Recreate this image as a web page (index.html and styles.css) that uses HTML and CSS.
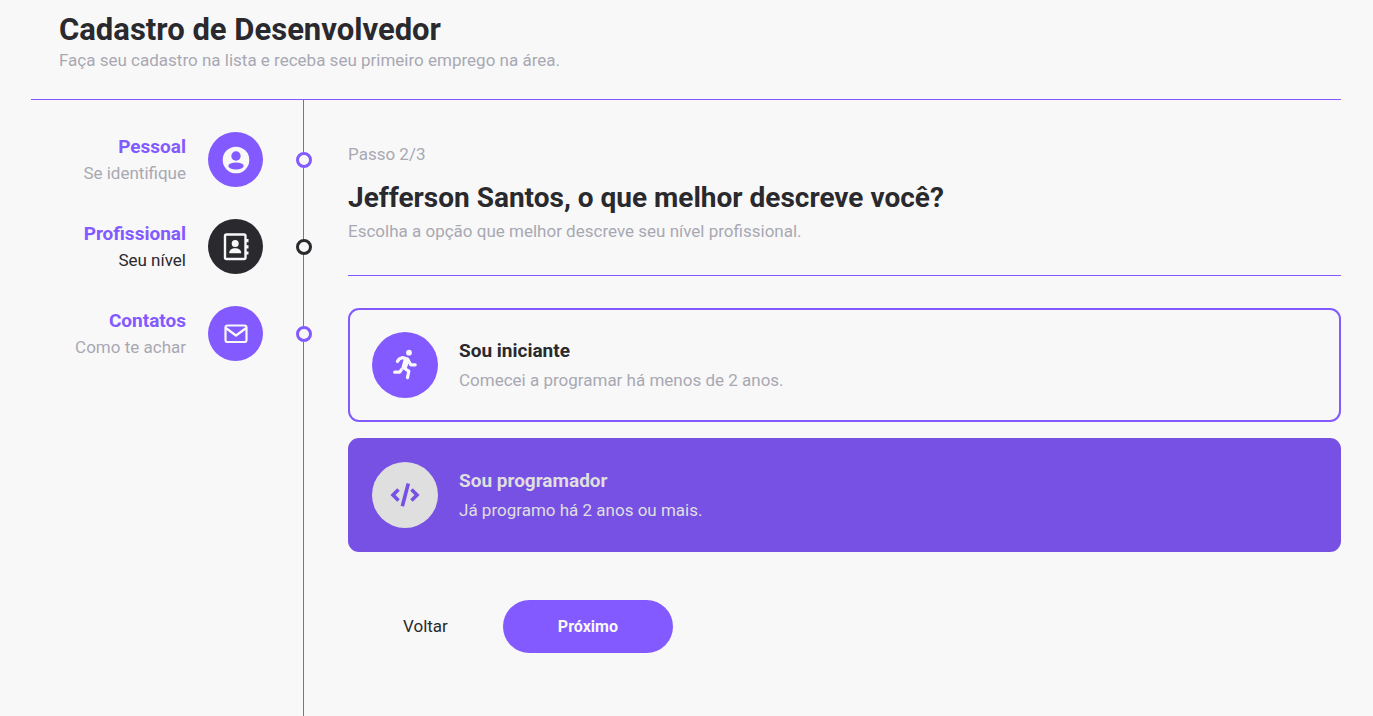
FILE: index.html
```html
<!DOCTYPE html>
<html lang="pt-BR">
<head>
<meta charset="utf-8">
<meta name="viewport" content="width=device-width, initial-scale=1">
<title>Cadastro de Desenvolvedor</title>
<link rel="stylesheet" href="styles.css">
</head>
<body>
<div class="page">
  <header class="header">
    <h1 class="header-title">Cadastro de Desenvolvedor</h1>
    <p class="header-text">Faça seu cadastro na lista e receba seu primeiro emprego na área.</p>
  </header>
  <div class="steps">
    <nav class="sidebar" aria-label="Etapas">
      <a class="step" href="#pessoal">
        <span class="step-info"><strong class="step-title">Pessoal</strong><span class="step-text">Se identifique</span></span>
        <span class="step-icon">
          <svg width="28" height="28" viewBox="0 0 28 28" aria-hidden="true"><circle cx="14" cy="14" r="13.3" fill="#f8f8f8"/><circle cx="14" cy="10" r="4.7" fill="#835aff"/><ellipse cx="14" cy="20" rx="7.7" ry="3.4" fill="#835aff"/></svg>
        </span>
        <span class="step-dot"></span>
      </a>
      <a class="step step-active" href="#profissional" aria-current="step">
        <span class="step-info"><strong class="step-title">Profissional</strong><span class="step-text">Seu nível</span></span>
        <span class="step-icon">
          <svg width="28" height="28" viewBox="0 0 28 28" aria-hidden="true"><rect x="3" y="1.500" width="20.5" height="24.5" rx="1.5" fill="none" stroke="#f8f8f8" stroke-width="2.4"/><path d="M24 6h2.500v3.200H24zM24 12.200h2.500v3.200H24zM24 18.400h2.500v3.200H24z" fill="#f8f8f8"/><circle cx="13.2" cy="10.5" r="3.5" fill="#f8f8f8"/><path d="M7.200 20.300c0-3.500 2.500-5 6-5s6 1.500 6 5z" fill="#f8f8f8"/></svg>
        </span>
        <span class="step-dot"></span>
      </a>
      <a class="step" href="#contatos">
        <span class="step-info"><strong class="step-title">Contatos</strong><span class="step-text">Como te achar</span></span>
        <span class="step-icon">
          <svg width="28" height="28" viewBox="0 0 28 28" fill="none" stroke="#f8f8f8" stroke-width="2.2" stroke-linecap="round" stroke-linejoin="round" aria-hidden="true"><rect x="3.500" y="5.500" width="21" height="16.500" rx="2"/><path d="M4.500 8.500l9.500 7 9.500-7"/></svg>
        </span>
        <span class="step-dot"></span>
      </a>
    </nav>
    <main class="content">
      <p class="content-step">Passo 2/3</p>
      <h2 class="content-title">Jefferson Santos, o que melhor descreve você?</h2>
      <p class="content-text">Escolha a opção que melhor descreve seu nível profissional.</p>
      <hr class="divider">
      <div class="options">
        <button class="option" type="button" aria-pressed="false">
          <span class="option-icon">
            <svg width="32" height="32" viewBox="0 0 32 32" fill="none" stroke="#f8f8f8" stroke-width="3.2" stroke-linecap="round" stroke-linejoin="round" aria-hidden="true"><circle cx="20" cy="3.700" r="2.900" fill="#f8f8f8" stroke="none"/><path d="M8.400 12.500l1.800-2.500 3.500-1.400 4.800 1.400 3.200 5.800h4.500"/><path d="M14 18.500l5.800 3.700-1.300 6.400"/><path d="M5.700 23.200h5l1.600-2.400"/><path d="M15.500 10l-2 7.500 1 1.500 3-1 2.200-7.500z" fill="#f8f8f8" stroke-width="1.500"/></svg>
          </span>
          <span class="option-info"><strong class="option-title">Sou iniciante</strong><span class="option-text">Comecei a programar há menos de 2 anos.</span></span>
        </button>
        <button class="option option-selected" type="button" aria-pressed="true">
          <span class="option-icon">
            <svg width="32" height="32" viewBox="0 0 32 32" fill="none" stroke="#7751e3" stroke-width="3.600" aria-hidden="true"><path d="M9.500 10.500L4 16l5.500 5.500M22.500 10.500L28 16l-5.500 5.500M19.300 4.500l-6 22.800"/></svg>
          </span>
          <span class="option-info"><strong class="option-title">Sou programador</strong><span class="option-text">Já programo há 2 anos ou mais.</span></span>
        </button>
      </div>
      <div class="actions">
        <a class="back" href="#pessoal">Voltar</a>
        <button class="next" type="button">Próximo</button>
      </div>
    </main>
  </div>
</div>
</body>
</html>
```
FILE: styles.css
```css
* {
  box-sizing: border-box;
  margin: 0;
  padding: 0;
}

body {
  background: #f8f8f8;
  color: #29292e;
  font-family: Roboto, "Liberation Sans", sans-serif;
  font-size: 17px;
}

button {
  border: 0;
  font: inherit;
  cursor: pointer;
}

a {
  color: inherit;
  text-decoration: none;
}

.page {
  display: flex;
  flex-direction: column;
  min-height: 100vh;
  padding: 0 32px 0 31px;
}

.header {
  padding: 12px 28px 27px;
  border-bottom: 1px solid #835aff;
}

.header-title {
  font-size: 31px;
  line-height: 36px;
}

.header-text {
  color: #a8a8b3;
  line-height: 24px;
}

.steps {
  display: flex;
  flex: 1;
}

.sidebar {
  display: flex;
  flex: none;
  flex-direction: column;
  gap: 32px;
  width: 273px;
  padding: 32px 40px 0 0;
  border-right: 1px solid #835aff;
}

.step {
  position: relative;
  display: flex;
  align-items: center;
  justify-content: flex-end;
  gap: 22px;
}

.step-info {
  display: flex;
  flex-direction: column;
  line-height: 27px;
  text-align: right;
}

.step-title,
.option-title {
  font-size: 19px;
}

.step-title {
  color: #835aff;
}

.step-text {
  color: #a8a8b3;
}

.step-icon {
  display: grid;
  place-items: center;
  width: 55px;
  height: 55px;
  border-radius: 50%;
  background: #835aff;
}

.step-dot {
  position: absolute;
  top: 50%;
  right: -49px;
  width: 16px;
  height: 16px;
  margin-top: -8px;
  border: 3px solid #835aff;
  border-radius: 50%;
  background: #f8f8f8;
}

.step-active .step-text {
  color: #29292e;
}

.step-active .step-icon {
  background: #29292e;
}

.step-active .step-dot {
  border-color: #29292e;
}

.content {
  flex: 1;
  padding: 43px 0 44px 44px;
}

.content-step,
.content-text {
  color: #a8a8b3;
  line-height: 22px;
}

.content-title {
  margin: 17px 0 6px;
  font-size: 28px;
  line-height: 32px;
}

.divider {
  height: 1px;
  margin: 33px 0 32px;
  border: 0;
  background: #835aff;
}

.options {
  display: flex;
  flex-direction: column;
  gap: 16px;
}

.option {
  display: flex;
  align-items: center;
  gap: 21px;
  padding: 22px;
  border: 2px solid #835aff;
  border-radius: 11px;
  background: transparent;
  color: #29292e;
  text-align: left;
}

.option-icon {
  display: grid;
  flex: none;
  place-items: center;
  width: 66px;
  height: 66px;
  border-radius: 50%;
  background: #835aff;
}

.option-info {
  display: flex;
  flex-direction: column;
  gap: 7px;
  line-height: 22px;
}

.option-text {
  color: #a8a8b3;
}

.option-selected {
  border-color: #7751e3;
  background: #7751e3;
  color: #dfdfdf;
}

.option-selected .option-icon {
  background: #dfdfdf;
}

.option-selected .option-text {
  color: #dfdfdf;
}

.actions {
  display: flex;
  align-items: center;
  margin-top: 48px;
}

.back,
.next {
  padding: 0 55px;
  line-height: 53px;
}

.next {
  border-radius: 27px;
  background: #835aff;
  color: #f8f8f8;
  font-size: 16px;
  font-weight: 700;
}
```
